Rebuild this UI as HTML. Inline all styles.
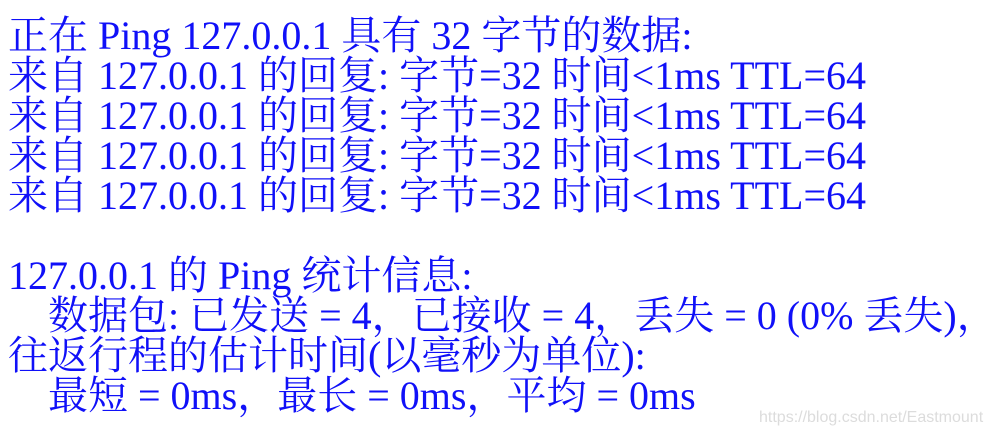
<!DOCTYPE html>
<html><head><meta charset="utf-8"><style>
html,body{margin:0;padding:0;background:#fff;}
body{width:995px;height:438px;overflow:hidden;position:relative;}
.t{position:absolute;left:8px;top:16px;font-family:"Liberation Serif","Noto Serif CJK SC",serif;font-size:40px;line-height:40px;color:#1010f8;white-space:pre;}
.i{padding-left:40px;}
.w{position:absolute;left:759px;top:409px;font-family:"Liberation Sans",sans-serif;font-size:16px;color:#dcdcdc;}
</style></head><body>
<div class="t"><div>正在 Ping 127.0.0.1 具有 32 字节的数据:</div><div>来自 127.0.0.1 的回复: 字节=32 时间&lt;1ms TTL=64</div><div>来自 127.0.0.1 的回复: 字节=32 时间&lt;1ms TTL=64</div><div>来自 127.0.0.1 的回复: 字节=32 时间&lt;1ms TTL=64</div><div>来自 127.0.0.1 的回复: 字节=32 时间&lt;1ms TTL=64</div><div> </div><div>127.0.0.1 的 Ping 统计信息:</div><div class="i">数据包: 已发送 = 4，已接收 = 4，丢失 = 0 (0% 丢失)，</div><div>往返行程的估计时间(以毫秒为单位):</div><div class="i">最短 = 0ms，最长 = 0ms，平均 = 0ms</div></div>
<div class="w">https://blog.csdn.net/Eastmount</div>
</body></html>
